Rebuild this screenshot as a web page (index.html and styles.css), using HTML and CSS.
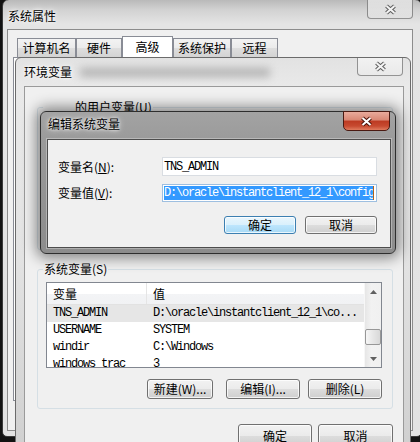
FILE: index.html
```html
<!DOCTYPE html>
<html lang="zh-CN">
<head>
<meta charset="utf-8">
<title>编辑系统变量</title>
<link rel="stylesheet" href="styles.css">
</head>
<body>
<div class="desk">

  <div class="win win-sys">
    <div class="titlebar">
      <span class="title">系统属性</span>
      <span class="cap cap-off">
        <svg width="13" height="11" viewBox="0 0 13 11"><path d="M2.5 2 L10.5 9 M10.5 2 L2.5 9" stroke="#5e5e5e" stroke-width="4" fill="none"/><path d="M2.5 2 L10.5 9 M10.5 2 L2.5 9" stroke="#f4f4f4" stroke-width="2" fill="none"/></svg>
      </span>
    </div>
    <div class="client client-sys">
      <div class="tabs">
        <span class="tab t1">计算机名</span>
        <span class="tab t2">硬件</span>
        <span class="tab tab-sel">高级</span>
        <span class="tab t4">系统保护</span>
        <span class="tab t5">远程</span>
      </div>
      <div class="tabpanel"></div>
    </div>
  </div>

  <div class="win win-env">
    <div class="titlebar">
      <span class="title">环境变量</span>
      <span class="smudge"></span>
      <span class="cap cap-off">
        <svg width="13" height="11" viewBox="0 0 13 11"><path d="M2.5 2 L10.5 9 M10.5 2 L2.5 9" stroke="#5e5e5e" stroke-width="4" fill="none"/><path d="M2.5 2 L10.5 9 M10.5 2 L2.5 9" stroke="#f4f4f4" stroke-width="2" fill="none"/></svg>
      </span>
    </div>
    <div class="client client-env">
      <fieldset class="group group-user">
        <legend class="legend-user">的用户变量(U)</legend>
      </fieldset>
      <fieldset class="group group-sys">
        <legend>系统变量(S)</legend>
        <div class="list">
          <div class="list-main">
            <div class="lhead"><span class="c1">变量</span><span class="c2">值</span></div>
            <div class="lrow sel"><span class="c1 mono">TNS_ADMIN</span><span class="c2 mono">D:\oracle\instantclient_12_1\co...</span></div>
            <div class="lrow"><span class="c1 mono">USERNAME</span><span class="c2 mono">SYSTEM</span></div>
            <div class="lrow"><span class="c1 mono">windir</span><span class="c2 mono">C:\Windows</span></div>
            <div class="lrow"><span class="c1 mono">windows_trac</span><span class="c2 mono">3</span></div>
          </div>
          <div class="vscroll">
            <span class="arr"><svg width="7" height="4" viewBox="0 0 7 4"><path d="M0 4 L3.5 0 L7 4 Z" fill="#606060"/></svg></span>
            <span class="thumb"></span>
            <span class="arr arr-down"><svg width="7" height="4" viewBox="0 0 7 4"><path d="M0 0 L7 0 L3.5 4 Z" fill="#606060"/></svg></span>
          </div>
        </div>
        <div class="grp-actions">
          <span class="btn b-new">新建(W)...</span>
          <span class="btn b-edit">编辑(I)...</span>
          <span class="btn b-del">删除(L)</span>
        </div>
      </fieldset>
      <div class="env-actions">
        <span class="btn b-ok">确定</span>
        <span class="btn b-cancel">取消</span>
      </div>
    </div>
  </div>

  <div class="win win-edit">
    <div class="titlebar">
      <span class="title">编辑系统变量</span>
      <span class="cap cap-red">
        <svg width="13" height="11" viewBox="0 0 13 11"><path d="M2.5 2 L10.5 9 M10.5 2 L2.5 9" stroke="#4a1208" stroke-width="4" fill="none"/><path d="M2.5 2 L10.5 9 M10.5 2 L2.5 9" stroke="#ffffff" stroke-width="2" fill="none"/></svg>
      </span>
    </div>
    <div class="client client-edit">
      <div class="field">
        <span class="lbl">变量名(<u>N</u>):</span>
        <span class="inp inp-name mono">TNS_ADMIN</span>
      </div>
      <div class="field field2">
        <span class="lbl">变量值(<u>V</u>):</span>
        <span class="inp inp-val mono"><span class="selected">D:\oracle\instantclient_12_1\config</span><span class="caret"></span></span>
      </div>
      <div class="dlg-actions">
        <span class="btn btn-def">确定</span>
        <span class="btn">取消</span>
      </div>
    </div>
  </div>

</div>
</body>
</html>
```

FILE: styles.css
```css
* { box-sizing: border-box; }
html, body { margin: 0; padding: 0; }
body {
  width: 420px;
  height: 442px;
  overflow: hidden;
  background: #121212;
  font-family: "Noto Sans CJK SC", "Liberation Sans", sans-serif;
  font-size: 12px;
  color: #000;
}
.desk { position: relative; width: 420px; height: 442px; overflow: hidden; }

.mono {
  font-family: "Liberation Mono", "Noto Sans CJK SC", monospace;
  font-size: 12px;
  letter-spacing: -1.2px;
}

/* ---------- windows ---------- */
.win { position: absolute; display: flex; flex-direction: column; }
.titlebar { display: flex; align-items: flex-start; flex: none; }
.title {
  line-height: 16px;
  white-space: nowrap;
  text-shadow: 0 0 6px #fff, 0 0 3px #fff;
}
.cap {
  margin-left: auto;
  display: flex;
  align-items: center;
  justify-content: center;
  flex: none;
}
.cap-off {
  width: 46px;
  border: 1px solid rgba(70, 70, 70, 0.55);
  border-top: none;
  border-radius: 0 0 4px 4px;
  background: linear-gradient(rgba(255,255,255,0.55), rgba(255,255,255,0.15));
}
.cap-red {
  width: 47px;
  height: 20px;
  margin-top: -1px;
  margin-right: 5px;
  border: 1px solid #4a1a12;
  border-radius: 0 0 5px 5px;
  background: linear-gradient(#e9ab9c 0%, #d98774 45%, #bd3a22 50%, #c74a30 78%, #e07b5e 100%);
}

/* system properties */
.win-sys {
  left: 2px;
  top: -1px;
  width: 420px;
  height: 438px;
  border: 1px solid #3a3a3a;
  border-radius: 7px 7px 5px 5px;
  background: linear-gradient(#b9b9b9 0, #d2d2d2 10px, #e4e4e4 24px, #e2e2e2 100%);
}
.win-sys .titlebar { height: 29px; padding-left: 5px; }
.win-sys .title { padding-top: 8px; }
.win-sys .cap { height: 19px; margin-right: 8px; }
.client-sys {
  margin-left: 4px;
  width: 406px;
  height: 402px;
  border: 1px solid #8c8c8c;
  background: #f0f0f0;
}
.tabs {
  display: flex;
  align-items: flex-end;
  height: 27px;
  padding: 6px 0 0 9px;
}
.tab {
  height: 19px;
  line-height: 17px;
  text-align: center;
  border: 1px solid #898c95;
  border-bottom: none;
  background: linear-gradient(#f3f3f3 0%, #ebebeb 50%, #dedede 51%, #d3d3d3 100%);
  white-space: nowrap;
}
.t1 { width: 59px; }
.t2 { width: 46px; }
.tab-sel { width: 51px; height: 21px; line-height: 19px; background: #fff; }
.t4 { width: 58px; }
.t5 { width: 47px; }
.tabpanel {
  margin-left: 5px;
  width: 390px;
  height: 344px;
  border: 1px solid #898c95;
  background: #fff;
}

/* environment variables */
.win-env {
  left: 15px;
  top: 57px;
  width: 396px;
  height: 400px;
  border: 1px solid #6b6b6b;
  border-radius: 6px 6px 0 0;
  background: linear-gradient(#e2e2e2 0, #e9e9e9 28px, #e3e3e3 200px, #cfcfcf 100%);
}
.win-env .titlebar { height: 28px; padding-left: 8px; }
.win-env .title { padding-top: 6px; }
.smudge {
  width: 190px;
  height: 9px;
  margin: 10px 0 0 8px;
  background: #8a8a8a;
  filter: blur(4px);
  opacity: 0.55;
}
.win-env .cap { height: 18px; margin-right: 7px; }
.client-env {
  margin-left: 8px;
  width: 380px;
  flex: 1;
  border: 1px solid #9a9a9a;
  background: #f0f0f0;
  display: flex;
  flex-direction: column;
  padding: 13px 10px 0 12px;
}

.group {
  margin: 0;
  padding: 6px 10px 9px 8px;
  border: 1px solid #d5dfe5;
  border-radius: 3px;
  min-width: 0;
}
.group legend {
  margin-left: -3px;
  padding: 0 1px;
  line-height: 14px;
  font-size: 12px;
}
.group-user { height: 150px; }
.group .legend-user { padding-left: 32px; }
.group-sys { margin-top: 12px; }

.list {
  display: flex;
  height: 86px;
  border: 1px solid #828790;
  background: #fff;
  overflow: hidden;
}
.list-main { flex: 1; min-width: 0; }
.lhead {
  display: flex;
  height: 22px;
  line-height: 21px;
  border-bottom: 1px solid #e2e2e2;
  background: linear-gradient(#ffffff 0%, #ffffff 50%, #f3f4f6 51%, #f1f2f4 100%);
}
.c1 { width: 100px; padding-left: 6px; flex: none; white-space: nowrap; overflow: hidden; }
.c2 { flex: 1; padding-left: 6px; white-space: nowrap; overflow: hidden; }
.lhead .c1 { border-right: 1px solid #e5e5e5; }
.lrow { display: flex; height: 17px; line-height: 17px; }
.lrow.sel { background: #e6e6e6; }

.vscroll {
  width: 17px;
  flex: none;
  display: flex;
  flex-direction: column;
  background: linear-gradient(to right, #e6e6e6, #f2f2f2 40%, #f0f0f0);
  border-left: 1px solid #f7f7f7;
}
.arr { height: 17px; display: flex; align-items: center; justify-content: center; flex: none; }
.arr-down { margin-top: auto; }
.thumb {
  margin: 29px 0 0 0;
  height: 16px;
  border: 1px solid #979797;
  border-radius: 2px;
  background: linear-gradient(to right, #f6f6f6, #e6e6e6 50%, #d8d8d8);
  flex: none;
}

.btn {
  display: flex;
  align-items: center;
  justify-content: center;
  height: 20px;
  border: 1px solid #707070;
  border-radius: 3px;
  background: linear-gradient(#f2f2f2 0%, #ebebeb 50%, #dddddd 51%, #cfcfcf 100%);
  box-shadow: inset 0 0 0 1px rgba(255,255,255,0.75);
  white-space: nowrap;
  flex: none;
  line-height: 16px;
}
.grp-actions { display: flex; justify-content: flex-end; margin-top: 11px; }
.b-new { width: 66px; margin-right: 13px; }
.b-edit { width: 74px; margin-right: 8px; }
.b-del { width: 74px; }
.env-actions { display: flex; justify-content: flex-end; gap: 6px; margin-top: 15px; }
.b-ok { width: 74px; height: 23px; }
.b-cancel { width: 75px; height: 23px; }

/* edit dialog */
.win-edit {
  left: 40px;
  top: 111px;
  width: 356px;
  height: 143px;
  border: 1px solid #2e2e2e;
  border-radius: 6px;
  background: linear-gradient(#a3a3a3 0, #9a9a9a 30px, #8c8c8c 100%);
  box-shadow: 0 0 14px 4px rgba(0, 0, 0, 0.45);
}
.win-edit .titlebar { height: 27px; padding-left: 7px; }
.win-edit .title { padding-top: 4px; }
.client-edit {
  margin-left: 6px;
  width: 344px;
  height: 109px;
  border: 1px solid #4d4d4d;
  box-shadow: 0 0 0 1px rgba(255,255,255,0.3);
  background: #f0f0f0;
  display: flex;
  flex-direction: column;
  padding: 17px 13px 0 10px;
}
.field { display: flex; align-items: center; height: 19px; }
.field2 { margin-top: 8px; height: 18px; }
.lbl { width: 104px; flex: none; line-height: 16px; white-space: nowrap; }
.lbl u { text-decoration-thickness: 1px; text-underline-offset: 1px; }
.inp {
  width: 216px;
  height: 100%;
  display: flex;
  align-items: center;
  padding-left: 1px;
  background: #fff;
  white-space: nowrap;
  overflow: hidden;
}
.inp-name { border: 1px solid #d9dde2; }
.inp-val { border: 1px solid #9ebfe0; }
.selected { background: #3399ff; color: #fff; line-height: 14px; }
.caret { width: 1px; height: 14px; background: #b4621e; margin-left: -1px; }
.dlg-actions { display: flex; justify-content: flex-end; gap: 9px; margin-top: 14px; }
.dlg-actions .btn { width: 72px; height: 18px; }
.btn-def {
  border-color: #3c7fb1;
  background: linear-gradient(#eaf6fd 0%, #d9f0fc 50%, #bee6fd 51%, #a7d9f5 100%);
}
```
